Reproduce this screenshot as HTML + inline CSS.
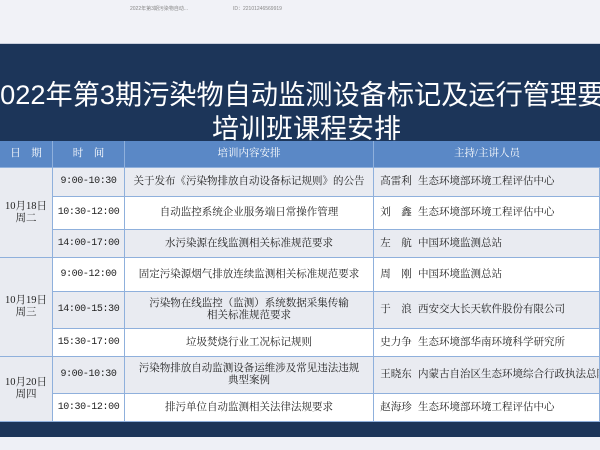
<!DOCTYPE html><html><head><meta charset="utf-8"><style>
body{margin:0;width:600px;height:450px;overflow:hidden;background:#eef0f6;position:relative;font-family:"Liberation Serif","Noto Serif CJK SC",serif;}
.a{position:absolute;}
.top{left:0;top:0;width:600px;height:43px;background:#f1f2f7;border-bottom:1px solid #c9cfdc}
.navy{left:0;top:44px;width:600px;height:393px;background:#1c3559}
.t{color:#fff;font-family:"Liberation Sans","Noto Sans CJK SC",sans-serif;white-space:nowrap}
.c{position:absolute;display:flex;align-items:center;justify-content:center;text-align:center;font-size:10.5px;color:#222;line-height:12px;box-sizing:border-box;border-right:1px solid #8fb0dc;border-bottom:1px solid #8fb0dc}
.h{background:#5a88c6;color:#fff}
.g{background:#e9ebf1}.w{background:#fff}
.tm{font-family:"Liberation Mono",monospace;font-size:10px;letter-spacing:-0.4px}
.p{justify-content:flex-start;padding-left:0}
.p span{display:inline-block;width:44px;flex-shrink:0}
</style></head><body>
<div class="a top"></div>
<div class="a" style="left:130px;top:5px;font-size:5px;color:#888;font-family:'Liberation Sans','Noto Sans CJK SC',sans-serif">2022年第3期污染物自动...</div>
<div class="a" style="left:233px;top:5px;font-size:5px;color:#888;font-family:'Liberation Sans',sans-serif">ID：22101246569919</div>
<div class="a navy"></div>
<div class="a t" style="left:-15px;top:72px;font-size:27.2px">2022年第3期污染物自动监测设备标记及运行管理要求</div>
<div class="a t" style="left:212px;top:107px;font-size:27px">培训班课程安排</div>

<div class="c h" style="left:0;top:141px;width:53px;height:27px">日　期</div>
<div class="c h" style="left:53px;top:141px;width:72px;height:27px">时　间</div>
<div class="c h" style="left:125px;top:141px;width:249px;height:27px">培训内容安排</div>
<div class="c h" style="left:374px;top:141px;width:226px;height:27px;border-right:none">主持/主讲人员</div>

<div class="c g" style="left:0;top:168px;width:53px;height:90px">10月18日<br>周二</div>
<div class="c g" style="left:0;top:258px;width:53px;height:99px">10月19日<br>周三</div>
<div class="c g" style="left:0;top:357px;width:53px;height:65px">10月20日<br>周四</div>

<div class="c g tm" style="left:53px;top:168px;width:72px;height:29px">9:00-10:30</div>
<div class="c g" style="left:125px;top:168px;width:249px;height:29px">关于发布《污染物排放自动设备标记规则》的公告</div>
<div class="c g p" style="left:374px;top:168px;width:226px;height:29px"><span>高雷利</span>生态环境部环境工程评估中心</div>

<div class="c w tm" style="left:53px;top:197px;width:72px;height:33px">10:30-12:00</div>
<div class="c w" style="left:125px;top:197px;width:249px;height:33px">自动监控系统企业服务端日常操作管理</div>
<div class="c w p" style="left:374px;top:197px;width:226px;height:33px"><span>刘　鑫</span>生态环境部环境工程评估中心</div>

<div class="c g tm" style="left:53px;top:230px;width:72px;height:28px">14:00-17:00</div>
<div class="c g" style="left:125px;top:230px;width:249px;height:28px">水污染源在线监测相关标准规范要求</div>
<div class="c g p" style="left:374px;top:230px;width:226px;height:28px"><span>左　航</span>中国环境监测总站</div>

<div class="c w tm" style="left:53px;top:258px;width:72px;height:34px">9:00-12:00</div>
<div class="c w" style="left:125px;top:258px;width:249px;height:34px">固定污染源烟气排放连续监测相关标准规范要求</div>
<div class="c w p" style="left:374px;top:258px;width:226px;height:34px"><span>周　刚</span>中国环境监测总站</div>

<div class="c g tm" style="left:53px;top:292px;width:72px;height:37px">14:00-15:30</div>
<div class="c g" style="left:125px;top:292px;width:249px;height:37px">污染物在线监控（监测）系统数据采集传输<br>相关标准规范要求</div>
<div class="c g p" style="left:374px;top:292px;width:226px;height:37px"><span>于　浪</span>西安交大长天软件股份有限公司</div>

<div class="c w tm" style="left:53px;top:329px;width:72px;height:28px">15:30-17:00</div>
<div class="c w" style="left:125px;top:329px;width:249px;height:28px">垃圾焚烧行业工况标记规则</div>
<div class="c w p" style="left:374px;top:329px;width:226px;height:28px"><span>史力争</span>生态环境部华南环境科学研究所</div>

<div class="c g tm" style="left:53px;top:357px;width:72px;height:37px">9:00-10:30</div>
<div class="c g" style="left:125px;top:357px;width:249px;height:37px">污染物排放自动监测设备运维涉及常见违法违规<br>典型案例</div>
<div class="c g p" style="left:374px;top:357px;width:226px;height:37px;white-space:nowrap;overflow:hidden"><span>王晓东</span>内蒙古自治区生态环境综合行政执法总队</div>

<div class="c w tm" style="left:53px;top:394px;width:72px;height:28px">10:30-12:00</div>
<div class="c w" style="left:125px;top:394px;width:249px;height:28px">排污单位自动监测相关法律法规要求</div>
<div class="c w p" style="left:374px;top:394px;width:226px;height:28px"><span>赵海珍</span>生态环境部环境工程评估中心</div>
</body></html>
